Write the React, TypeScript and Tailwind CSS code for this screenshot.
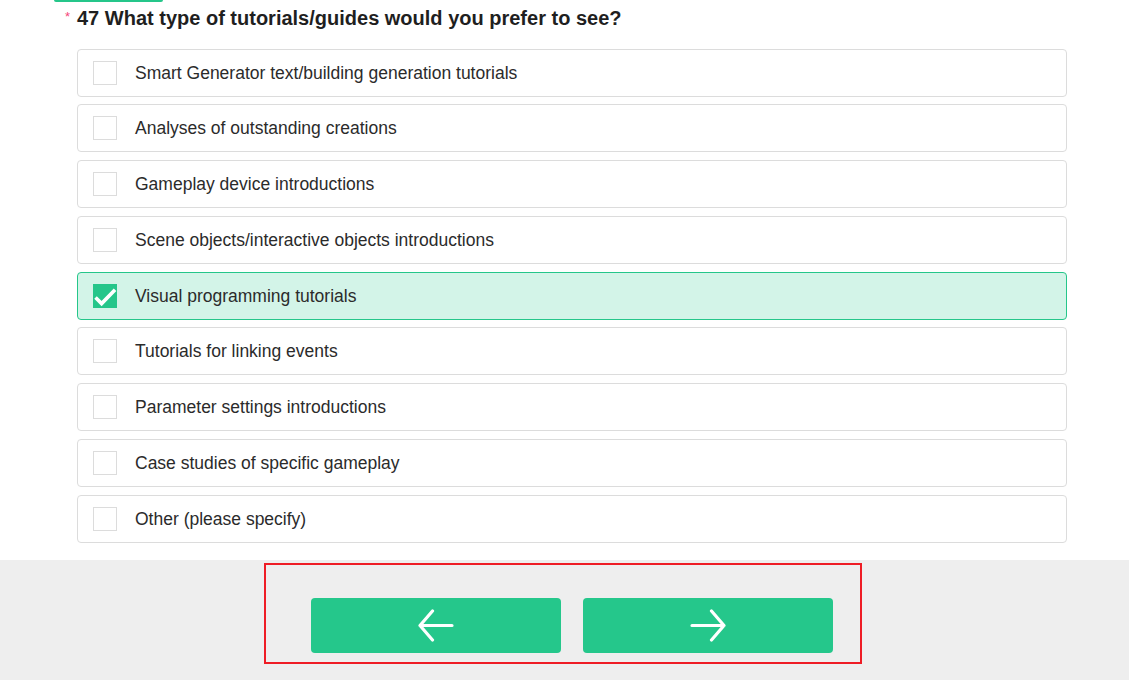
import React from "react";

const options = [
  "Smart Generator text/building generation tutorials",
  "Analyses of outstanding creations",
  "Gameplay device introductions",
  "Scene objects/interactive objects introductions",
  "Visual programming tutorials",
  "Tutorials for linking events",
  "Parameter settings introductions",
  "Case studies of specific gameplay",
  "Other (please specify)",
];

const selected = 4;

function marginFor(i: number) {
  if (i === 0) return "mt-0";
  if (i === 1 || i === 5) return "mt-[7px]";
  return "mt-[8px]";
}

export default function App() {
  return (
    <div
      className="w-full h-[680px] flex flex-col bg-white overflow-hidden"
      style={{ fontFamily: '"Liberation Sans", Arial, sans-serif' }}
    >
      <div className="h-[560px] flex flex-col">
        <div className="ml-[54px] w-[109px] h-[2px] bg-[#25c68a] rounded-b-[2px]" />
        <div className="mt-[4px] h-[24px] flex items-center pl-[65px]">
          <span className="text-[#f5467a] text-[13px] w-[12px] leading-none -mt-[3px]">*</span>
          <span className="text-[20px] font-bold text-[#1f1f1f] leading-[24px]">
            47 What type of tutorials/guides would you prefer to see?
          </span>
        </div>
        <div className="mt-[19px] ml-[77px] w-[990px] flex flex-col">
          {options.map((o, i) => {
            const sel = i === selected;
            const base = sel
              ? "h-[48px] flex items-center pl-[15px] rounded-[4px] border border-[#25c68a] bg-[#d3f4e8]"
              : "h-[48px] flex items-center pl-[15px] rounded-[4px] border border-[#dcdcdc] bg-white";
            return (
              <div key={o} className={`${base} ${marginFor(i)}`}>
                {sel ? (
                  <div className="w-[24px] h-[24px] bg-[#25c68a]">
                    <svg width="24" height="24" viewBox="0 0 24 24" fill="none">
                      <path
                        d="M3.8 14.8 L8.6 19.6 L20.8 7"
                        stroke="white"
                        strokeWidth="3.6"
                        strokeLinecap="square"
                        strokeLinejoin="miter"
                      />
                    </svg>
                  </div>
                ) : (
                  <div className="w-[24px] h-[24px] border border-[#dcdcdc] bg-white" />
                )}
                <span className="ml-[18px] mt-[1px] text-[17.5px] text-[#2b2b2b] leading-none">{o}</span>
              </div>
            );
          })}
        </div>
      </div>
      <div className="flex-1 bg-[#eeeeee] pt-[3px] pl-[264px]">
        <div className="w-[598px] h-[101px] border-2 border-[#ee1c25] pt-[33px] pl-[45px] flex gap-[22px]">
          <button className="w-[250px] h-[55px] bg-[#25c78b] rounded-[4px] flex items-center justify-center">
            <svg width="38" height="33" viewBox="0 0 38 33" fill="none">
              <path
                d="M35 16.5 H3 M15.5 2 L3 16.5 L15.5 31"
                stroke="white"
                strokeWidth="3.2"
                strokeLinecap="round"
                strokeLinejoin="round"
              />
            </svg>
          </button>
          <button className="w-[250px] h-[55px] bg-[#25c78b] rounded-[4px] flex items-center justify-center">
            <svg width="38" height="33" viewBox="0 0 38 33" fill="none">
              <path
                d="M3 16.5 H35 M22.5 2 L35 16.5 L22.5 31"
                stroke="white"
                strokeWidth="3.2"
                strokeLinecap="round"
                strokeLinejoin="round"
              />
            </svg>
          </button>
        </div>
      </div>
    </div>
  );
}
